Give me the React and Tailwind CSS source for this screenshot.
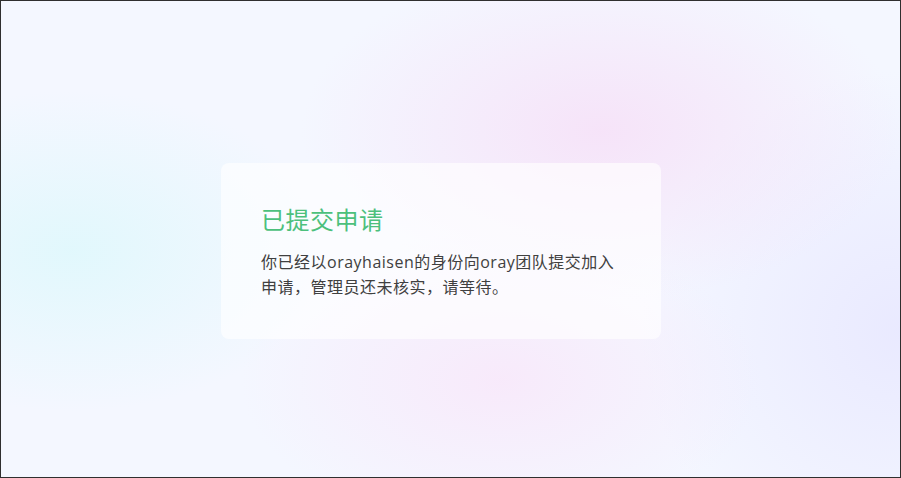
import React from 'react';

export default function App() {
    return (
        <div
            className="w-[901px] h-[478px] border border-[#2f2f2f] relative overflow-hidden bg-[#f4f7ff]"
            style={{
                backgroundImage:
                    'radial-gradient(ellipse 260px 160px at 70px 250px, rgba(222,248,252,0.85), rgba(222,248,252,0) 100%),' +
                    'radial-gradient(ellipse 300px 170px at 600px 130px, rgba(246,226,248,0.95), rgba(246,226,248,0) 100%),' +
                    'radial-gradient(ellipse 260px 150px at 500px 380px, rgba(248,232,250,0.9), rgba(248,232,250,0) 100%),' +
                    'radial-gradient(ellipse 260px 260px at 900px 330px, rgba(232,232,255,0.9), rgba(232,232,255,0) 100%)',
                fontFamily: '"Open Sans", "Noto Sans CJK SC", sans-serif',
            }}
        >
            {/* Card */}
            <div className="pl-[220px] pt-[162px]">
                <div className="w-[440px] h-[176px] rounded-lg bg-white/65 px-10 pt-[41px]">
                    <h1 className="text-[24px] leading-[32px] text-[#4cc07c] font-normal tracking-[0.5px]">已提交申请</h1>
                    <p className="mt-[14px] max-w-[358px] text-[16px] leading-[25px] text-[#404040] tracking-[0.5px]">
                        你已经以orayhaisen的身份向oray团队提交加入申请，管理员还未核实，请等待。
                    </p>
                </div>
            </div>
        </div>
    );
}
